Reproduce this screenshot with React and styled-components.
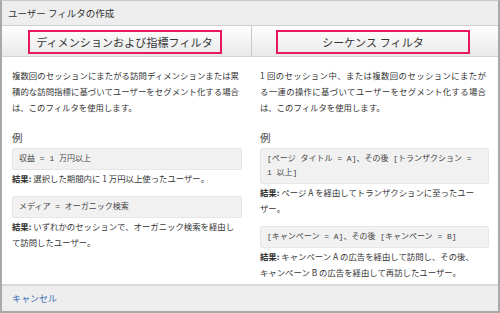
import React from "react";
import styled, { createGlobalStyle } from "styled-components";

const Global = createGlobalStyle`
  html, body { margin: 0; padding: 0; background: #fff; }
  body { font-family: "Noto Sans CJK JP", "Noto Sans", sans-serif; color: #333; }
  * { box-sizing: border-box; }
`;

const Dialog = styled.div`
  width: 500px;
  height: 313px;
  display: flex;
  flex-direction: column;
  border: 2px solid #a9a9a9;
  border-top: 1px solid #c8c8c8;
  background: #fff;
`;

const Header = styled.div`
  height: 24px;
  background: #eeeeee;
  display: flex;
  align-items: center;
  padding-left: 6px;
  font-size: 9.5px;
  color: #333;
`;

const TabBar = styled.div`
  height: 32px;
  display: grid;
  grid-template-columns: 249px 1fr;
  border-top: 1px solid #cfcfcf;
  border-bottom: 1px solid #d4d4d4;
  background: linear-gradient(#ffffff, #e9e9e9);
`;

const Tab = styled.div`
  display: flex;
  align-items: center;
  justify-content: center;
  border-left: ${(p) => (p.$divider ? "1px solid #cacaca" : "none")};
  padding-right: 4px;
  padding-top: 1px;
`;

const TabLabel = styled.div`
  width: 194px;
  height: 24px;
  border: 2.5px solid #e8185f;
  display: flex;
  align-items: center;
  justify-content: center;
  font-size: 11px;
  color: #333;
  letter-spacing: 0.1px;
`;

const Body = styled.div`
  flex: 1;
  display: grid;
  grid-template-columns: 249px 1fr;
  border-bottom: 2px solid #d8d8d8;
`;

const Column = styled.div`
  padding: 10px 9px 0 ${(p) => (p.$right ? "9px" : "10px")};
`;

const Para = styled.div`
  width: ${(p) => p.$width}px;
  font-size: 8.4px;
  line-height: 16px;
  color: #333;
`;

const Line = styled.span`
  display: block;
  white-space: nowrap;
  text-align: left;
  text-align-last: ${(p) => (p.$full ? "justify" : "left")};
`;

const ExampleTitle = styled.div`
  margin-top: 16px;
  font-size: 10.5px;
  line-height: 14px;
  color: #444;
`;

const CodeBox = styled.div`
  margin-top: ${(p) => p.$top || 3}px;
  background: #f1f1f1;
  border: 1px solid #e6e6e6;
  border-radius: 2px;
  padding: 3px 6px;
  font-family: "Liberation Mono", "Noto Sans CJK JP", monospace;
  font-size: 8px;
  line-height: 14px;
  color: #444;
`;

const Result = styled.div`
  font-size: 8.4px;
  line-height: 16px;
  color: #333;
`;

const Bold = styled.b`
  font-weight: 700;
`;

const Footer = styled.div`
  height: 25px;
  background: #eeeeee;
  display: flex;
  align-items: center;
  padding-left: 10px;
`;

const CancelLink = styled.a`
  font-size: 9px;
  color: #3a6fb6;
  text-decoration: none;
`;

export default function App() {
  return (
    <>
      <Global />
      <Dialog>
        <Header>ユーザー フィルタの作成</Header>
        <TabBar>
          <Tab>
            <TabLabel>ディメンションおよび指標フィルタ</TabLabel>
          </Tab>
          <Tab $divider>
            <TabLabel>シーケンス フィルタ</TabLabel>
          </Tab>
        </TabBar>
        <Body>
          <Column>
            <Para $width={227}>
              <Line $full>複数回のセッションにまたがる訪問ディメンションまたは累</Line>
              <Line $full>積的な訪問指標に基づいてユーザーをセグメント化する場合</Line>
              <Line>は、このフィルタを使用します。</Line>
            </Para>
            <ExampleTitle>例</ExampleTitle>
            <CodeBox>収益 = 1 万円以上</CodeBox>
            <Result>
              <Bold>結果:</Bold> 選択した期間内に 1 万円以上使ったユーザー。
            </Result>
            <CodeBox $top={10}>メディア = オーガニック検索</CodeBox>
            <Result>
              <Bold>結果:</Bold> いずれかのセッションで、オーガニック検索を経由し
              <br />
              て訪問したユーザー。
            </Result>
          </Column>
          <Column $right>
            <Para $width={226}>
              <Line $full>1 回のセッション中、または複数回のセッションにまたが</Line>
              <Line $full>る一連の操作に基づいてユーザーをセグメント化する場合</Line>
              <Line>は、このフィルタを使用します。</Line>
            </Para>
            <ExampleTitle>例</ExampleTitle>
            <CodeBox>
              [ページ タイトル = A]、その後 [トランザクション =
              <br />1 以上]
            </CodeBox>
            <Result>
              <Bold>結果:</Bold> ページ A を経由してトランザクションに至ったユー
              <br />
              ザー。
            </Result>
            <CodeBox $top={10}>[キャンペーン = A]、その後 [キャンペーン = B]</CodeBox>
            <Result>
              <Bold>結果:</Bold> キャンペーン A の広告を経由して訪問し、その後、
              <br />
              キャンペーン B の広告を経由して再訪したユーザー。
            </Result>
          </Column>
        </Body>
        <Footer>
          <CancelLink href="#">キャンセル</CancelLink>
        </Footer>
      </Dialog>
    </>
  );
}
